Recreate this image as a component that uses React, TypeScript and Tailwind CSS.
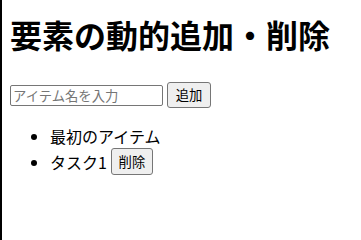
import { useState } from "react";

const font = { fontFamily: '"Noto Sans CJK JP", "Liberation Sans", sans-serif' };

export default function App() {
  const [items, setItems] = useState<{ id: number; label: string; removable: boolean }[]>([
    { id: 0, label: "最初のアイテム", removable: false },
    { id: 1, label: "タスク1", removable: true },
  ]);
  const [text, setText] = useState("");

  const add = () => {
    if (!text.trim()) return;
    setItems([...items, { id: Date.now(), label: text, removable: true }]);
    setText("");
  };

  return (
    <div className="min-h-screen border-l-2 border-black bg-white pl-2 text-black" style={font}>
      <h1 className="pt-[11px] text-[32px] font-bold leading-[46px]">要素の動的追加・削除</h1>

      {/* input row */}
      <div className="mt-[25px] flex h-[26px] items-center">
        <input
          value={text}
          onChange={(e) => setText(e.target.value)}
          placeholder="アイテム名を入力"
          className="h-[21px] w-[153px] rounded-[2px] border border-[#767676] px-[2px] text-[13.33px] placeholder:text-[#757575] outline-none"
        />
        <button
          onClick={add}
          className="ml-[4px] h-[26px] w-[44px] rounded-[3px] border border-[#767676] bg-[#efefef] text-[13.33px] leading-none"
        >
          追加
        </button>
      </div>

      <ul className="mt-[16px] list-disc pl-10 text-[16px] leading-[24px]">
        {items.map((item) => (
          <li key={item.id}>
            <span className="inline-flex items-center">
              {item.label}
              {item.removable && (
                <button
                  onClick={() => setItems(items.filter((i) => i.id !== item.id))}
                  className="ml-[4px] h-[27px] w-[42px] rounded-[3px] border border-[#767676] bg-[#efefef] text-[13.33px] leading-none"
                >
                  削除
                </button>
              )}
            </span>
          </li>
        ))}
      </ul>
    </div>
  );
}
